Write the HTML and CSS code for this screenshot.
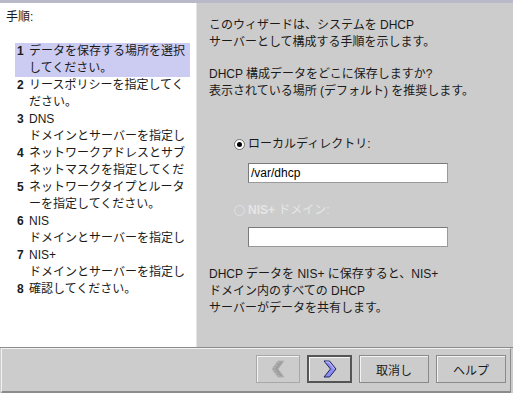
FILE: index.html
```html
<!DOCTYPE html>
<html>
    <head>
        <link rel="stylesheet" href="styles.css">
    </head>
    <body>
        <div class="window">
            <div class="top-strip"></div>
            <div class="main">
                <!-- step list -->
                <div class="steps">
                    <div class="steps-title">手順:</div>
                    <ol class="step-list">
                        <li class="step current"><span class="num">1</span><span class="text">データを保存する場所を選択<br>してください。</span></li>
                        <li class="step"><span class="num">2</span><span class="text">リースポリシーを指定してく<br>ださい。</span></li>
                        <li class="step"><span class="num">3</span><span class="text">DNS<br>ドメインとサーバーを指定し</span></li>
                        <li class="step"><span class="num">4</span><span class="text">ネットワークアドレスとサブ<br>ネットマスクを指定してくだ</span></li>
                        <li class="step"><span class="num">5</span><span class="text">ネットワークタイプとルータ<br>ーを指定してください。</span></li>
                        <li class="step"><span class="num">6</span><span class="text">NIS<br>ドメインとサーバーを指定し</span></li>
                        <li class="step"><span class="num">7</span><span class="text">NIS+<br>ドメインとサーバーを指定し</span></li>
                        <li class="step"><span class="num">8</span><span class="text">確認してください。</span></li>
                    </ol>
                </div>

                <!-- wizard page -->
                <div class="content">
                    <p>このウィザードは、システムを DHCP<br>サーバーとして構成する手順を示します。</p>
                    <p>DHCP 構成データをどこに保存しますか?<br>表示されている場所 (デフォルト) を推奨します。</p>

                    <div class="options">
                        <label class="radio-row">
                            <span class="radio checked"></span>
                            <span>ローカルディレクトリ:</span>
                        </label>
                        <div class="field">/var/dhcp</div>

                        <label class="radio-row disabled">
                            <span class="radio"></span>
                            <span><b>NIS+</b> ドメイン:</span>
                        </label>
                        <div class="field second"></div>
                    </div>

                    <p class="note">DHCP データを NIS+ に保存すると、NIS+<br>ドメイン内のすべての DHCP<br>サーバーがデータを共有します。</p>
                </div>
            </div>

            <!-- navigation buttons -->
            <div class="button-bar">
                <div class="button-bar-inner">
                    <button class="nav-btn" disabled title="戻る">
                        <svg width="16" height="18" viewBox="0 0 16 18">
                            <path d="M8 1 L2 9 L8 17 L14 17 L8 9 L14 1 Z" fill="#9e9e9e" stroke="#b4b4b4" stroke-width="1"/>
                            <path d="M9 2 L4 9 L9 16" fill="none" stroke="#c8c8c8" stroke-width="1" stroke-dasharray="1 1"/>
                        </svg>
                    </button>
                    <button class="nav-btn default" title="次へ">
                        <svg width="16" height="18" viewBox="0 0 16 18">
                            <path d="M2 1 L7.5 1 L14 9 L7.5 17 L2 17 L8.5 9 Z" fill="#8c8cf0" stroke="#20205e" stroke-width="1" stroke-linejoin="miter"/>
                            <path d="M3.5 2 L7 2 L12.5 9" fill="none" stroke="#c4c4ff" stroke-width="1"/>
                        </svg>
                    </button>
                    <button class="text-btn">取消し</button>
                    <button class="text-btn">ヘルプ</button>
                </div>
            </div>
        </div>
    </body>
</html>
```

FILE: styles.css
```css
body {
    margin: 0;
    padding: 0;
    background-color: #cccccc;
    font-family: "Liberation Sans", "Noto Sans CJK JP", sans-serif;
    font-size: 12px;
    color: #1a1a1a;
}
.window {
    width: 513px;
    height: 393px;
    display: flex;
    flex-direction: column;
    overflow: hidden;
}
.top-strip {
    height: 3px;
    background-color: #b9b9c9;
}
.main {
    height: 344px;
    display: flex;
}
.steps {
    width: 197px;
    background-color: #fff;
    border-right: 1px solid #e4e4e4;
    padding: 6px 0 0 6px;
    box-sizing: border-box;
    line-height: 17px;
}
.steps-title {
    height: 17px;
}
.step-list {
    list-style: none;
    margin: 17px 0 0 9px;
    padding: 0;
    width: 175px;
}
.step {
    display: flex;
    white-space: nowrap;
}
.step.current {
    background-color: #ccccf2;
}
.num {
    width: 12px;
    padding-left: 2px;
    font-weight: bold;
    font-family: "Liberation Sans", sans-serif;
}
.text {
    flex: 1;
}
.content {
    flex: 1;
    padding: 14px 0 0 12px;
    line-height: 17px;
}
.content p {
    margin: 0 0 15px 0;
    white-space: nowrap;
}
.options {
    padding: 21px 0 0 25px;
    margin-bottom: 19px;
}
.radio-row {
    display: flex;
    align-items: center;
    gap: 3px;
    height: 17px;
}
.radio {
    width: 11px;
    height: 11px;
    border-radius: 50%;
    border: 1px solid #6e6e6e;
    background-color: #fff;
    box-sizing: border-box;
    position: relative;
}
.radio.checked::after {
    content: "";
    position: absolute;
    left: 2px;
    top: 2px;
    width: 5px;
    height: 5px;
    border-radius: 50%;
    background-color: #000;
}
.radio-row.disabled {
    color: #e6e6e6;
    margin-top: 19px;
}
.radio-row.disabled .radio {
    border-color: #e2e2e2;
    background-color: transparent;
}
.field {
    margin: 10px 0 0 14px;
    width: 200px;
    height: 20px;
    box-sizing: border-box;
    border: 1px solid #7a7a7a;
    border-right-color: #9a9a9a;
    border-bottom-color: #9a9a9a;
    background-color: #fff;
    padding: 0 2px;
    line-height: 18px;
    color: #000;
}
.field.second {
    margin-top: 8px;
}
.content p.note {
    margin: 0;
}
.button-bar {
    height: 46px;
    border-top: 1px solid #8c8c8c;
    box-sizing: border-box;
}
.button-bar-inner {
    height: 100%;
    margin-left: 1px;
    margin-right: 2px;
    border-left: 1px solid #f2f2f2;
    border-top: 1px solid #f2f2f2;
    border-right: 1px solid #8c8c8c;
    border-bottom: 2px solid #8c8c8c;
    box-sizing: border-box;
    display: flex;
    justify-content: flex-end;
    align-items: flex-start;
    gap: 7px;
    padding: 6px 4px 0 0;
}
button {
    height: 28px;
    background-color: #cccccc;
    border: 1px solid #8a8a8a;
    box-shadow: inset 1px 1px 0 #f4f4f4;
    font-family: "Liberation Sans", "Noto Sans CJK JP", sans-serif;
    font-size: 12px;
    color: #1a1a1a;
    padding: 0;
    display: flex;
    align-items: center;
    justify-content: center;
}
.nav-btn {
    width: 44px;
}
.nav-btn.default {
    border: 2px solid #555555;
    width: 45px;
}
.nav-btn:disabled {
    border-color: #a8a8a8;
}
.text-btn {
    width: 70px;
}
```
